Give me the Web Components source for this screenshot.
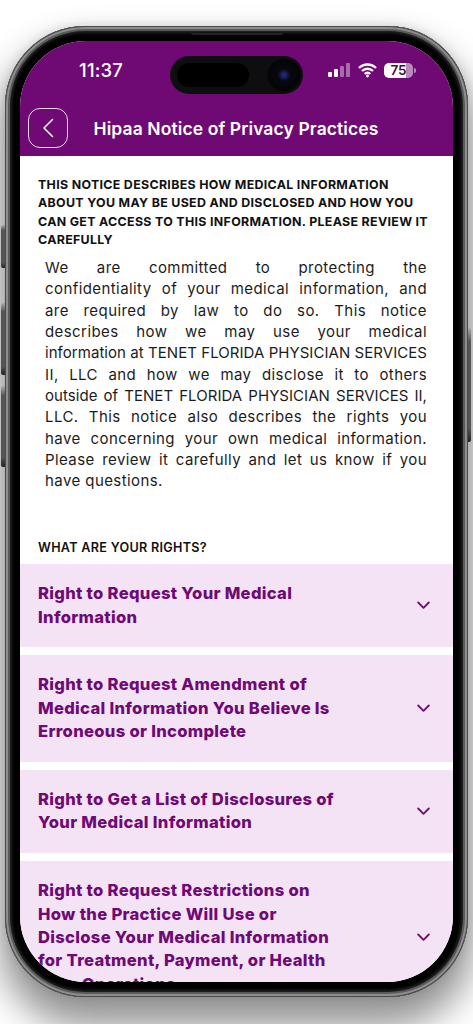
<!DOCTYPE html>
<html lang="en">
<head>
<meta charset="utf-8">
<title>Hipaa Notice of Privacy Practices</title>
<style>
  html, body { margin: 0; height: 1024px; overflow: hidden; background: #fff; }
  body { font-family: Inter, "Open Sans", sans-serif; }
</style>
</head>
<body>
<phone-frame>
  <status-bar time="11:37" battery="75"></status-bar>
  <app-header title="Hipaa Notice of Privacy Practices"></app-header>
  <notice-body>
    <span slot="lead">THIS NOTICE DESCRIBES HOW MEDICAL INFORMATION</span>
    <span slot="lead">ABOUT YOU MAY BE USED AND DISCLOSED AND HOW YOU</span>
    <span slot="lead">CAN GET ACCESS TO THIS INFORMATION. PLEASE REVIEW IT</span>
    <span slot="lead">CAREFULLY</span>
    <span>We are committed to protecting the</span>
    <span>confidentiality of your medical information, and</span>
    <span>are required by law to do so. This notice</span>
    <span>describes how we may use your medical</span>
    <span class="caps">information at TENET FLORIDA PHYSICIAN SERVICES</span>
    <span>II, LLC and how we may disclose it to others</span>
    <span class="caps">outside of TENET FLORIDA PHYSICIAN SERVICES II,</span>
    <span>LLC. This notice also describes the rights you</span>
    <span>have concerning your own medical information.</span>
    <span>Please review it carefully and let us know if you</span>
    <span class="last">have questions.</span>
  </notice-body>
  <section-title>WHAT ARE YOUR RIGHTS?</section-title>
  <rights-item>Right to Request Your Medical<br>Information</rights-item>
  <rights-item>Right to Request Amendment of<br>Medical Information You Believe Is<br>Erroneous or Incomplete</rights-item>
  <rights-item>Right to Get a List of Disclosures of<br>Your Medical Information</rights-item>
  <rights-item>Right to Request Restrictions on<br>How the Practice Will Use or<br>Disclose Your Medical Information<br>for Treatment, Payment, or Health<br>Care Operations</rights-item>
</phone-frame>

<script>
class PhoneFrame extends HTMLElement {
  constructor() {
    super();
    this.attachShadow({ mode: "open" });
    this.shadowRoot.innerHTML = /* html */`
    <style>
      :host {
        display: block;
        position: relative;
        width: 463px;
        height: 971px;
        margin: 26px 5px 0;
        border-radius: 80px;
        background: #000;
        box-shadow: 0 24px 36px 6px rgb(0 0 0 / 42%), 0 0 12px rgb(0 0 0 / 12%);
      }
      .bezel {
        box-sizing: border-box;
        height: 100%;
        padding: 15px;
        border-radius: inherit;
        box-shadow:
          inset 0 0 0 1px #4a4a4a,
          inset 0 0 0 3px #8e8e8e,
          inset 0 0 0 5px #5a5a5a,
          inset 0 0 3px 7px #222;
      }
      .screen {
        height: 100%;
        overflow: hidden;
        border-radius: 66px;
        background: #fff;
        display: flex;
        flex-direction: column;
      }
      .speaker {
        position: absolute;
        left: 186px;
        top: 7px;
        width: 92px;
        height: 2px;
        border-radius: 0 0 2px 2px;
        background: #222;
      }
      .btn { position: absolute; width: 4px; background: linear-gradient(#aaa, #555 12%, #555 88%, #222); border-radius: 2px 0 0 2px; left: -4px; }
      .btn.r { left: auto; right: -3px; width: 3px; border-radius: 0 2px 2px 0; }
    </style>
    <i class="btn" style="top:199px;height:43px"></i>
    <i class="btn" style="top:277px;height:72px"></i>
    <i class="btn" style="top:360px;height:81px"></i>
    <i class="btn r" style="top:302px;height:114px"></i>
    <div class="bezel">
      <div class="screen"><slot></slot></div>
    </div>
    <i class="speaker"></i>`;
  }
}

class StatusBar extends HTMLElement {
  constructor() {
    super();
    this.attachShadow({ mode: "open" });
  }

  connectedCallback() {
    const time = this.getAttribute("time") ?? "";
    const battery = this.getAttribute("battery") ?? "";
    this.shadowRoot.innerHTML = /* html */`
    <style>
      :host {
        display: flex;
        position: relative;
        align-items: flex-start;
        height: 67px;
        box-sizing: border-box;
        padding: 18px 40px 0 59px;
        background: #6f0a74;
        color: #fff;
        flex: none;
      }
      .time { font: 500 18.5px/22px Inter, sans-serif; letter-spacing: 0.2px; }
      .icons { margin-left: auto; display: flex; align-items: center; gap: 7px; height: 22px; }
      .batt {
        display: flex;
        align-items: center;
        justify-content: center;
        width: 29px;
        height: 15px;
        border-radius: 5px;
        background: linear-gradient(90deg, #fff 75%, #b98bbd 75%);
        color: #3c1040;
        font: 600 13.5px/15px Inter, sans-serif;
        position: relative;
      }
      .batt::after {
        content: "";
        position: absolute;
        right: -3px;
        top: 5px;
        width: 2px;
        height: 5px;
        border-radius: 0 2px 2px 0;
        background: #b98bbd;
      }
      .island {
        position: absolute;
        left: 150px;
        top: 15px;
        width: 133px;
        height: 38px;
        border-radius: 19px;
        background:
          radial-gradient(circle at 114px 19px, #24246e 0 2px, #14143c 4px, #07070f 6.5px, #050507 16px, #0e0e10 17px);
      }
      .island::before {
        content: "";
        position: absolute;
        left: 7px;
        top: 7px;
        width: 72px;
        height: 24px;
        border-radius: 12px;
        background: #000;
      }
    </style>
    <span class="time">${time}</span>
    <div class="island"></div>
    <div class="icons">
      <svg width="23" height="15" viewBox="0 0 23 15" fill="#fff">
        <rect x="0" y="9" width="4" height="5" rx="1"/>
        <rect x="6" y="6" width="4" height="8" rx="1"/>
        <rect x="12" y="3" width="4" height="11" rx="1" opacity=".4"/>
        <rect x="18" y="0" width="4" height="14" rx="1" opacity=".4"/>
      </svg>
      <svg width="19" height="15" viewBox="0 0 19 15" fill="none" stroke="#fff" stroke-width="2.4">
        <path d="M1 5a12 12 0 0 1 17 0"/>
        <path d="M4 8a7.8 7.8 0 0 1 11 0"/>
        <path d="M6.8 11a3.6 3.6 0 0 1 5.4 0"/>
        <circle cx="9.5" cy="13" r="1" fill="#fff" stroke-width="1"/>
      </svg>
      <span class="batt">${battery}</span>
    </div>`;
  }
}

class AppHeader extends HTMLElement {
  constructor() {
    super();
    this.attachShadow({ mode: "open" });
  }

  connectedCallback() {
    this.shadowRoot.innerHTML = /* html */`
    <style>
      :host {
        display: flex;
        align-items: center;
        gap: 26px;
        padding: 0 0 8px 7.5px;
        background: #6f0a74;
        color: #fff;
        flex: none;
      }
      .back {
        box-sizing: border-box;
        width: 40px;
        height: 40px;
        border: 1px solid #e9d6ea;
        border-radius: 12px;
        display: flex;
        align-items: center;
        justify-content: center;
      }
      h1 { margin: 0; padding-top: 2px; font: 600 17.5px/24px Inter, sans-serif; letter-spacing: 0.1px; white-space: nowrap; }
    </style>
    <span class="back">
      <svg width="12" height="20" viewBox="0 0 12 20" fill="none" stroke="#fff" stroke-width="1.5" stroke-linecap="round" stroke-linejoin="round">
        <path d="M10.5 1.5 2 10l8.5 8.5"/>
      </svg>
    </span>
    <h1>${this.getAttribute("title") ?? ""}</h1>`;
  }
}

class NoticeBody extends HTMLElement {
  constructor() {
    super();
    this.attachShadow({ mode: "open" });
    this.shadowRoot.innerHTML = /* html */`
    <style>
      :host { display: block; padding: 20px 26px 0 18px; flex: none; }
      .lead { display: flex; flex-direction: column; font: 700 12.4px/18.3px Inter, sans-serif; letter-spacing: 0.32px; color: #111; margin-bottom: 8px; }
      .text { display: flex; flex-direction: column; margin-left: 7px; font: 400 15px/21.3px Inter, sans-serif; letter-spacing: 0.42px; color: #1c1c1c; }
      ::slotted(span) { white-space: nowrap; }
      .text ::slotted(span) { display: block; text-align: justify; text-align-last: justify; white-space: normal; }
      .text ::slotted(.caps) { letter-spacing: 0.05px; }
      .text ::slotted(.last) { text-align-last: left; }
    </style>
    <div class="lead"><slot name="lead"></slot></div>
    <div class="text"><slot></slot></div>`;
  }
}

class SectionTitle extends HTMLElement {
  constructor() {
    super();
    this.attachShadow({ mode: "open" });
    this.shadowRoot.innerHTML = /* html */`
    <style>
      :host {
        display: block;
        margin: 47.5px 0 7px;
        padding-left: 18px;
        font: 600 12.6px/18px Inter, sans-serif;
        letter-spacing: 0.3px;
        color: #111;
        flex: none;
      }
    </style>
    <slot></slot>`;
  }
}

class RightsItem extends HTMLElement {
  constructor() {
    super();
    this.attachShadow({ mode: "open" });
    this.shadowRoot.innerHTML = /* html */`
    <style>
      :host {
        display: flex;
        align-items: center;
        justify-content: space-between;
        box-sizing: border-box;
        padding: 18.2px 23px 18.2px 18px;
        margin-bottom: 8px;
        background: #f4e3f4;
        color: #6f0a74;
        font: 800 16.6px/23.4px Inter, sans-serif;
        letter-spacing: 0.3px;
        flex: none;
      }
      svg { flex: none; }
    </style>
    <div><slot></slot></div>
    <svg width="13" height="9" viewBox="0 0 13 9" fill="none" stroke="#6f0a74" stroke-width="1.8" stroke-linecap="round" stroke-linejoin="round">
      <path d="M1.2 1.5 6.5 6.8l5.3-5.3"/>
    </svg>`;
  }
}

customElements.define("phone-frame", PhoneFrame);
customElements.define("status-bar", StatusBar);
customElements.define("app-header", AppHeader);
customElements.define("notice-body", NoticeBody);
customElements.define("section-title", SectionTitle);
customElements.define("rights-item", RightsItem);
</script>
</body>
</html>
